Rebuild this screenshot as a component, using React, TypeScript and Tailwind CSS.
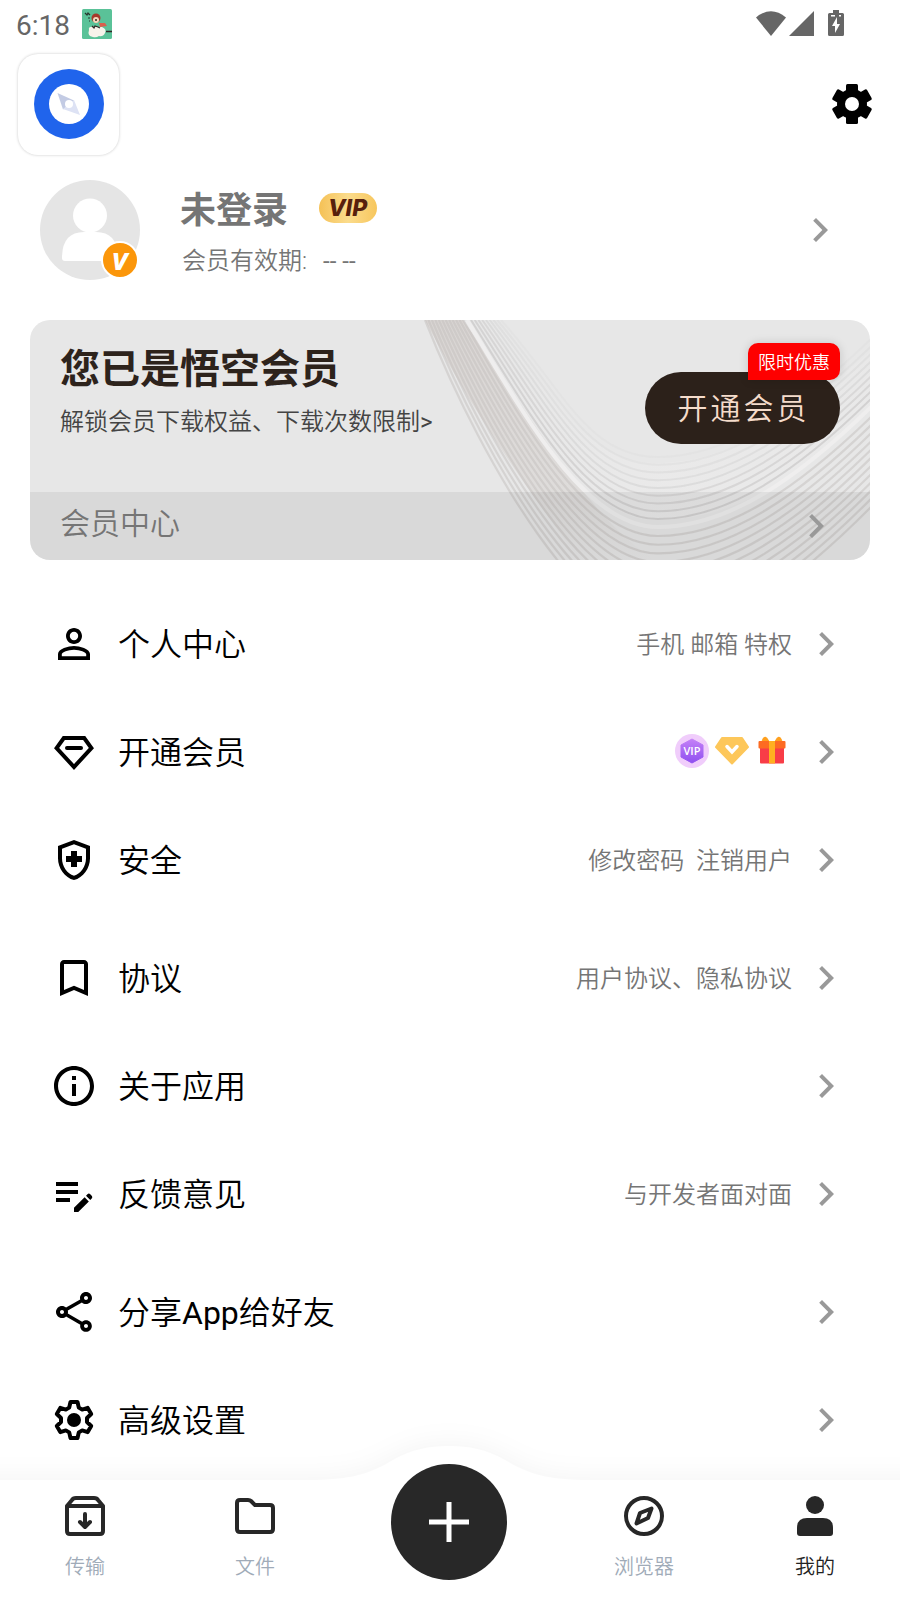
import type { ReactNode } from 'react'
import {
  MdBookmarkBorder,
  MdChevronRight,
  MdEditNote,
  MdInfoOutline,
  MdOutlineHealthAndSafety,
  MdOutlineShare,
  MdPersonOutline,
} from 'react-icons/md'

function DiamondIcon() {
  return (
    <svg viewBox="0 0 24 24" className="size-12" fill="none" stroke="currentColor" strokeWidth="2" strokeLinecap="round">
      <path d="M6.900 5h10.200L20.700 10 12 19.500 3.300 10z" />
      <path d="M8.500 10h7" />
    </svg>
  )
}

function AdvancedIcon() {
  return (
    <svg viewBox="0 0 48 48" className="size-12">
      <path
        d="M20.500 6h7l1.300 5.600 3.400 2 5.500-1.700 3.500 6.100-4.200 4v4l4.200 4-3.500 6.100-5.500-1.700-3.400 2L27.500 42h-7l-1.300-5.600-3.400-2-5.500 1.700L6.800 30l4.200-4v-4l-4.200-4 3.500-6.100 5.500 1.700 3.400-2z"
        fill="none"
        stroke="#000"
        strokeWidth="4"
        strokeLinejoin="round"
      />
      <circle cx="24" cy="24" r="7" />
    </svg>
  )
}

function GearIcon() {
  return (
    <svg viewBox="0 0 48 48" className="size-12">
      <g fill="#000">
        <rect x="18" y="4" width="12" height="40" rx="1.5" />
        <rect x="18" y="4" width="12" height="40" rx="1.5" transform="rotate(60 24 24)" />
        <rect x="18" y="4" width="12" height="40" rx="1.5" transform="rotate(120 24 24)" />
        <circle cx="24" cy="24" r="15" />
      </g>
      <circle cx="24" cy="24" r="7" fill="#fff" />
    </svg>
  )
}

function VipPerks() {
  return (
    <div className="-mt-[4px] flex items-center gap-[6px] pr-[3px]">
      <svg viewBox="0 0 34 34" className="size-[34px]">
        <defs>
          <linearGradient id="hex" x1="0" y1="0" x2="0" y2="1">
            <stop offset="0" stopColor="#c481f7" />
            <stop offset="1" stopColor="#8f4ff0" />
          </linearGradient>
        </defs>
        <circle cx="17" cy="17" r="17" fill="#f0cdfb" />
        <path d="M17 5l11 6v12l-11 6-11-6V11z" fill="url(#hex)" stroke="url(#hex)" strokeLinejoin="round" />
        <text x="17" y="20.8" textAnchor="middle" fontSize="11" fontWeight="600" fill="#fff" fontFamily="Open Sans">
          VIP
        </text>
      </svg>
      <svg viewBox="0 0 34 34" className="size-[34px]">
        <path d="M7 4h20l6 9-16 16.500L1 13z" fill="#fdc75a" stroke="#fdc75a" strokeWidth="2" strokeLinejoin="round" />
        <path d="M12 12.500l5 5.500 5-5.500" fill="none" stroke="#fff" strokeWidth="3.500" strokeLinecap="round" />
      </svg>
      <svg viewBox="0 0 34 34" className="size-[34px]">
        <path d="M8 6q2-5 5 1zM26 6q-2-5-5 1z" fill="#ffa01e" stroke="#ffa01e" strokeWidth="2" />
        <path d="M5 14h24v14.500a1 1 0 0 1-1 1H6a1 1 0 0 1-1-1z" fill="#f83d47" />
        <rect x="3.500" y="7" width="27" height="7.500" rx="1" fill="#fd6b22" />
        <rect x="14" y="7" width="6" height="22.500" fill="#ffb020" />
      </svg>
    </div>
  )
}

function CardWaves() {
  const inner = Array.from({ length: 9 }, (_, i) => i / 8)
  const outer = Array.from({ length: 12 }, (_, i) => i / 11)
  const curve = (x: number, bottom: number, right: number) =>
    `M${x} 0C${x + 62} ${bottom * 0.5} 557 ${bottom} 628 ${bottom}S770 ${(bottom + right) / 2 + 10} 842 ${right}`
  return (
    <svg viewBox="0 0 840 240" className="absolute inset-0 h-full w-full" fill="none">
      <defs>
        <linearGradient id="band" x1="0" y1="0" x2="0" y2="1">
          <stop offset="0" stopColor="#d9d5d3" />
          <stop offset="0.7" stopColor="#dcd9d7" stopOpacity="0.8" />
          <stop offset="1" stopColor="#dedcda" stopOpacity="0" />
        </linearGradient>
        <linearGradient id="glow" x1="0" y1="0" x2="1" y2="0">
          <stop offset="0" stopColor="#efeeee" stopOpacity="0" />
          <stop offset="0.5" stopColor="#efeeee" stopOpacity="0.35" />
          <stop offset="1" stopColor="#efeeee" stopOpacity="0.2" />
        </linearGradient>
      </defs>
      <path d="M437 0C499 94 556 200 625 200S760 170 842 85V30C760 100 700 143 625 143S524 67 462 0z" fill="url(#glow)" />
      <path d="M395 0C437 82 490 160 550 240H625C560 200 499 94 433 0z" fill="url(#band)" />
      {outer.map((t) => (
        <path key={t} d={curve(395 + 38 * t, 312 - 96 * t, 186 - 90 * t)} stroke="#c3bfbe" strokeWidth="2.200" opacity="0.5" />
      ))}
      <path d={curve(437, 207, 86)} stroke="#efeeee" strokeWidth="4" />
      {inner.map((t) => (
        <path key={t} d={curve(441 + 30 * t, 199 - 62 * t, 78 - 60 * t)} stroke="#c9c7c7" strokeWidth="2" opacity={0.7 - 0.6 * t} />
      ))}
    </svg>
  )
}

function StatusBar() {
  return (
    <div className="flex h-12 items-center justify-between pr-14 pl-4 text-[#666]">
      <div className="flex items-center gap-3">
        <span className="pt-[3px] text-[28px] leading-none font-[450]">6:18</span>
        <svg viewBox="0 0 30 30" className="size-[30px]">
          <rect width="30" height="30" rx="1.500" fill="#5ac298" />
          <path d="M3 4l2 2 1-2 2 2M6 9h2M7 12h1" stroke="#26352c" strokeWidth="1.200" fill="none" />
          <path d="M7 21q-1-4 5-3l8 0q5 2 3 6-2 4-6 3-3 2-6 1-6-1-4-7z" fill="#f7f3ea" />
          <circle cx="14" cy="9" r="4.500" fill="#a63a2c" />
          <circle cx="14" cy="11" r="3" fill="#f5d9bd" />
          <path d="M17 14l6 0 2 3-7 1z" fill="#d9604d" />
          <path d="M10 17l2 2 1-2 3 1 2 1M13 11h2M24 22.500h6" stroke="#322725" strokeWidth="1.300" fill="none" />
        </svg>
      </div>
      <div className="flex items-center pb-[2px]">
        <svg viewBox="0 0 30 25" className="h-[25px] w-[30px]" fill="currentColor">
          <path d="M0 6.500Q15-6 30 6.500L15 25z" />
        </svg>
        <svg viewBox="0 0 25 25" className="ml-[3px] size-[25px]" fill="currentColor">
          <path d="M25 0v25H0z" />
        </svg>
        <svg viewBox="0 0 16 26" className="ml-[14px] h-[26px] w-4" fill="currentColor">
          <path d="M5 0h6v3h3.500A1.500 1.500 0 0 1 16 4.500v20a1.500 1.500 0 0 1-1.500 1.500h-13A1.500 1.500 0 0 1 0 24.500v-20A1.500 1.500 0 0 1 1.500 3H5z" />
          <path d="M9 7L4 16h3v7l5-9H9zM3 5h4v1.500H3zM11 5h2v1.500h-2z" fill="#fff" />
        </svg>
      </div>
    </div>
  )
}

function Header() {
  return (
    <div className="flex h-[107px] items-center justify-between pt-[5px] pr-6 pl-[18px]">
      <div className="flex size-[101px] items-center justify-center rounded-[20px] bg-white shadow-[0_0_3px_rgba(0,0,0,0.22)]">
        <svg viewBox="0 0 70 70" className="size-[70px]">
          <circle cx="35" cy="35" r="35" fill="#2064ec" />
          <circle cx="35" cy="35" r="20" fill="#fff" />
          <path d="M23.500 24l16.500 7.500-11 9z" fill="#c3cbe4" />
          <path d="M40 31l6 15-17-6z" fill="#dde2f4" />
          <circle cx="35" cy="35" r="4" fill="#fff" />
        </svg>
      </div>
      <GearIcon />
    </div>
  )
}

function Profile() {
  return (
    <div className="mt-[25px] flex h-[100px] items-center pr-14 pl-10">
      <div className="relative size-[100px]">
        <svg viewBox="0 0 100 100" className="size-[100px]">
          <circle cx="50" cy="50" r="50" fill="#e5e5e5" />
          <circle cx="50" cy="35.500" r="17" fill="#fff" />
          <path d="M22 78q0-26 22-26h12q22 0 22 26 0 3-3 3H25q-3 0-3-3z" fill="#fff" />
        </svg>
        <span className="absolute top-[61px] left-[61px] flex size-[38px] items-center justify-center rounded-full border-2 border-white bg-[#fb960a] pb-[3px] font-['Open_Sans'] text-[31px] leading-none font-bold text-white italic">
          v
        </span>
      </div>
      <div className="ml-[40px] flex-1 pt-[8px]">
        <div className="flex items-center">
          <span className="text-[36px] leading-[48px] font-bold text-[#757575]">未登录</span>
          <span className="-mt-[6px] ml-[31px] flex h-[30px] w-[58px] items-center justify-center rounded-full bg-linear-to-r from-[#f5c155] via-[#fbdc8c] to-[#f7c65c] pt-px pr-px font-[Inter] text-[23px] leading-none font-extrabold text-[#57200d] italic">
            VIP
          </span>
        </div>
        <div className="mt-[6px] flex pl-[2px] text-[24px] leading-[40px] font-[350] text-[#757575]">
          <span>会员有效期:</span>
          <span className="ml-[16px] font-normal">-- --</span>
        </div>
      </div>
      <MdChevronRight className="-mt-px size-12 text-[#999]" />
    </div>
  )
}

function MemberCard() {
  return (
    <div className="relative mx-[30px] mt-10 flex h-60 flex-col overflow-hidden rounded-[20px] bg-[#e7e7e7]">
      <CardWaves />
      <div className="relative flex h-[172px] justify-between pr-[30px] pl-[30px]">
        <div className="pt-[26px]">
          <h2 className="text-[40px] leading-[48px] font-bold text-[#2d231c]">您已是悟空会员</h2>
          <p className="mt-[8px] text-[24px] leading-[40px] font-[350] text-[#444]">
            解锁会员下载权益、下载次数限制<span className="font-normal">&gt;</span>
          </p>
        </div>
        <div className="relative mt-[52px] flex h-[72px] w-[195px] items-center justify-center rounded-full bg-[#2c211a] pt-px pl-[2px] text-[30px] font-[350] tracking-[3px] text-[#f5dccb]">
          开通会员
          <span className="absolute -top-[29px] right-0 flex h-[37px] w-[92px] items-center justify-center rounded-[10px] rounded-bl-none bg-[#fe0000] pt-[2px] text-[18px] tracking-normal text-white shadow-[0_0_10px_rgba(0,0,0,0.15)]">
            限时优惠
          </span>
        </div>
      </div>
      <div className="relative flex flex-1 items-center justify-between bg-black/6 pl-[30px]">
        <span className="pb-[6px] text-[30px] font-[350] text-[#757575]">会员中心</span>
        <MdChevronRight className="-mt-px mr-[30px] size-12 text-[#999]" />
      </div>
    </div>
  )
}

function Row({ icon, label, children }: { icon: ReactNode; label: ReactNode; children?: ReactNode }) {
  return (
    <div className="flex h-[108px] items-center px-[50px]">
      {icon}
      <span className="ml-[20px] flex-1 pt-[2px] text-[32px] font-[350] text-black">{label}</span>
      <span className="pt-[2px] text-[24px] font-[350] whitespace-pre text-[#757575]">{children}</span>
      <MdChevronRight className="-mt-px ml-[10px] size-12 text-[#999]" />
    </div>
  )
}

function Tab({ label, width, active, children }: { label: string; width: string; active?: boolean; children: ReactNode }) {
  return (
    <div className={`relative flex flex-col items-center pt-3 ${width}`}>
      <svg viewBox="0 0 48 48" className="size-12" fill="none" stroke="#272727" strokeWidth="4" strokeLinecap="round" strokeLinejoin="round">
        {children}
      </svg>
      <span className={`mt-[12px] text-[20px] leading-[30px] font-[350] ${active ? 'text-[#222]' : 'text-[#a0abb8]'}`}>{label}</span>
    </div>
  )
}

function TabBar() {
  return (
    <div className="relative flex h-[120px]">
      <svg viewBox="0 0 900 160" className="absolute -top-10 left-0 h-40 w-[900px] overflow-visible">
        <path
          d="M-40 40H310C350 40 370 34 393 20C412 9 430 6 449 6S486 9 505 20C528 34 548 40 588 40H940V200H-40z"
          fill="#fff"
          className="drop-shadow-[0_-4px_12px_rgba(0,0,0,0.04)]"
        />
      </svg>
      <Tab label="传输" width="w-[170px]">
        <path d="M6 14v25q0 3 3 3h30q3 0 3-3V14zM6 14l5-6q1-2 4-2h18q3 0 4 2l5 6M24 22v12M19 30l5 5 5-5" />
      </Tab>
      <Tab label="文件" width="w-[170px]">
        <path d="M6 11q0-3 3-3h8q2 0 3 1l4 4h15q3 0 3 3v21q0 3-3 3H9q-3 0-3-3z" />
      </Tab>
      <div className="relative flex w-[218px] justify-center">
        <div className="-mt-4 flex size-[116px] items-center justify-center rounded-full bg-[#282828]">
          <svg viewBox="0 0 40 40" className="size-10" stroke="#fff" strokeWidth="5">
            <path d="M0 20h40M20 0v40" />
          </svg>
        </div>
      </div>
      <Tab label="浏览器" width="w-[172px]">
        <circle cx="24" cy="24" r="18" />
        <path d="M31.500 16.500L28 26l-11.500 5.500L20 21z" strokeWidth="4" />
      </Tab>
      <Tab label="我的" width="w-[170px]" active>
        <circle cx="24" cy="13" r="9" fill="#272727" stroke="none" />
        <path d="M6 36q0-10 10-10h16q10 0 10 10v5q0 3-3 3H9q-3 0-3-3z" fill="#272727" stroke="none" />
      </Tab>
    </div>
  )
}

export default function App() {
  return (
    <div className="h-[1600px] w-[900px] overflow-hidden bg-white font-[Roboto,'Noto_Sans_CJK_SC',sans-serif]">
      <StatusBar />
      <Header />
      <Profile />
      <MemberCard />
      <div className="flex h-[920px] flex-col gap-[10px] pt-[30px]">
        <div>
          <Row icon={<MdPersonOutline className="size-12" />} label="个人中心">手机 邮箱 特权</Row>
          <Row icon={<DiamondIcon />} label="开通会员"><VipPerks /></Row>
          <Row icon={<MdOutlineHealthAndSafety className="size-12" />} label="安全">{'修改密码  注销用户'}</Row>
        </div>
        <div>
          <Row icon={<MdBookmarkBorder className="size-12" />} label="协议">用户协议、隐私协议</Row>
          <Row icon={<MdInfoOutline className="size-12" />} label="关于应用" />
          <Row icon={<MdEditNote className="size-12" />} label="反馈意见">与开发者面对面</Row>
        </div>
        <div>
          <Row
            icon={<MdOutlineShare className="size-12" />}
            label={<>分享<span className="font-normal">App</span>给好友</>}
          />
          <Row icon={<AdvancedIcon />} label="高级设置" />
        </div>
      </div>
      <TabBar />
    </div>
  )
}
